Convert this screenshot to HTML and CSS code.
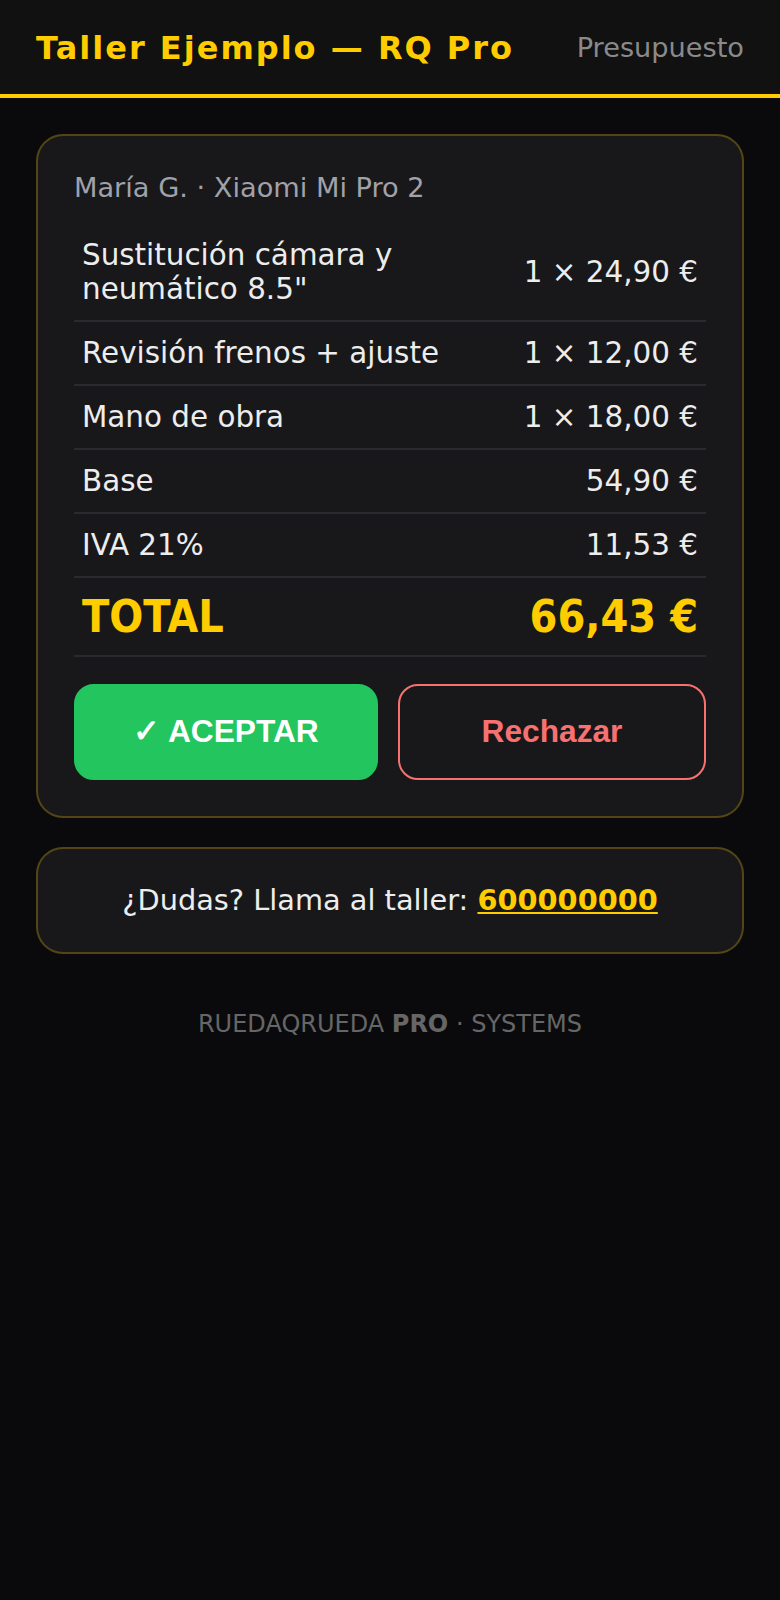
FILE: index.html
```html
<!DOCTYPE html>
<html lang="es">
<head>
  <meta charset="UTF-8">
  <meta name="viewport" content="width=device-width, initial-scale=1.0">
  <title>Presupuesto - Taller Ejemplo</title>
  <link rel="stylesheet" href="styles.css">
</head>
<body>
  <header class="topbar">
    <h1 class="brand">Taller Ejemplo — RQ Pro</h1>
    <span class="topbar-tag">Presupuesto</span>
  </header>

  <main class="page">
    <section class="card quote">
      <p class="quote-meta">María G. · Xiaomi Mi Pro 2</p>

      <div class="lines">
        <div class="line">
          <span class="line-name">Sustitución cámara y neumático 8.5"</span>
          <span class="line-price">1 × 24,90 €</span>
        </div>
        <div class="line">
          <span class="line-name">Revisión frenos + ajuste</span>
          <span class="line-price">1 × 12,00 €</span>
        </div>
        <div class="line">
          <span class="line-name">Mano de obra</span>
          <span class="line-price">1 × 18,00 €</span>
        </div>
        <div class="line">
          <span class="line-name">Base</span>
          <span class="line-price">54,90 €</span>
        </div>
        <div class="line">
          <span class="line-name">IVA 21%</span>
          <span class="line-price">11,53 €</span>
        </div>
        <div class="line line-total">
          <span class="line-name">TOTAL</span>
          <span class="line-price">66,43 €</span>
        </div>
      </div>

      <div class="actions">
        <button class="btn btn-accept">✓ ACEPTAR</button>
        <button class="btn btn-reject">Rechazar</button>
      </div>
    </section>

    <section class="card help">
      ¿Dudas? Llama al taller: <a class="phone" href="tel:600000000">600000000</a>
    </section>

    <footer class="footer">RUEDAQRUEDA <b>PRO</b> · SYSTEMS</footer>
  </main>
</body>
</html>
```

FILE: styles.css
```css
* {
  margin: 0;
  padding: 0;
  box-sizing: border-box;
}

body {
  background: #0a0a0c;
  color: #ededed;
  font-family: "DejaVu Sans", sans-serif;
  min-height: 100vh;
}

.topbar {
  display: flex;
  justify-content: space-between;
  align-items: center;
  height: 98px;
  padding: 1px 36px 0;
  background: #111111;
  border-bottom: 4px solid #ffcc00;
}

.brand {
  font-size: 32px;
  font-weight: 700;
  letter-spacing: 2px;
  color: #ffcc00;
}

.topbar-tag {
  font-size: 27.2px;
  color: #8a8a8a;
}

.page {
  padding: 36px;
}

.card {
  background: #18181b;
  border: 2px solid rgba(255, 204, 0, 0.26);
  border-radius: 27px;
}

.quote {
  padding: 36px;
}

.quote-meta {
  font-size: 27.2px;
  color: #a1a1aa;
  margin-bottom: 21px;
}

.line {
  display: flex;
  justify-content: space-between;
  align-items: center;
  gap: 24px;
  padding: 14px 8px;
  border-bottom: 2px solid #2a2a2e;
  font-size: 29.4px;
}

.line-price {
  white-space: nowrap;
}

.line-total {
  padding: 13px 8px;
  font-family: "DejaVu Sans Condensed", "DejaVu Sans", sans-serif;
  font-stretch: condensed;
  font-weight: 700;
  font-size: 44.5px;
  color: #ffcc00;
}

.actions {
  display: grid;
  grid-template-columns: 304fr 308fr;
  gap: 20px;
  margin-top: 27px;
}

.btn {
  padding: 27px 10px 28px;
  border: 2px solid transparent;
  border-radius: 20px;
  font-family: "Liberation Sans", Arial, sans-serif;
  font-weight: 700;
  font-size: 31.7px;
  cursor: pointer;
}

.btn-accept {
  background: #22c55e;
  border-color: #22c55e;
  color: #ffffff;
}

.btn-reject {
  background: transparent;
  border-color: #f87171;
  color: #f87171;
}

.help {
  margin-top: 29px;
  padding: 34px 20px 35px;
  text-align: center;
  font-size: 28.8px;
}

.phone {
  color: #ffcc00;
  font-weight: 700;
}

.footer {
  margin-top: 56px;
  text-align: center;
  font-size: 24px;
  color: #666666;
}
```
